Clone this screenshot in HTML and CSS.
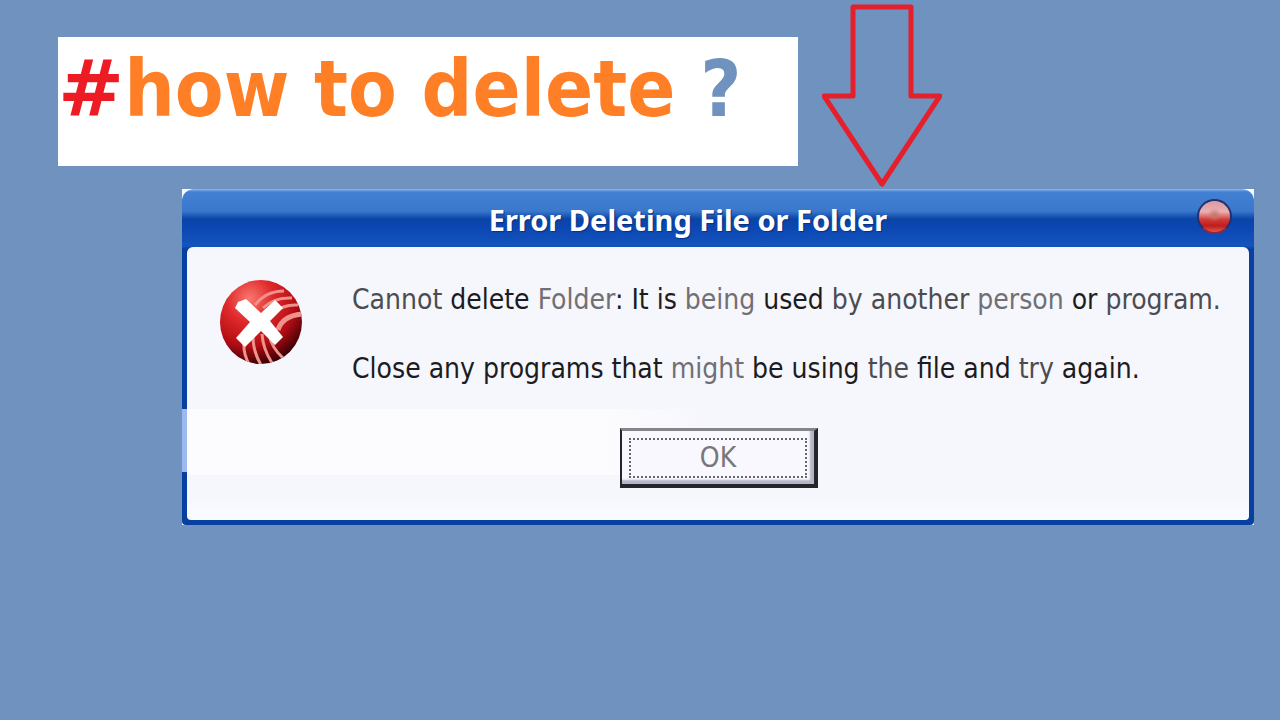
FILE: index.html
```html
<!DOCTYPE html>
<html lang="en">
<head>
<meta charset="utf-8">
<meta name="viewport" content="width=device-width, initial-scale=1">
<title>How to delete?</title>
<link rel="stylesheet" href="styles.css">
</head>
<body>
<header class="top">
  <h1 class="banner"><span class="banner-hash">#</span>how to delete <span class="banner-mark">?</span></h1>
  <svg class="arrow" viewBox="0 0 120 184" aria-hidden="true">
    <path d="M31 3H89V92H118L60 180L2 92H31Z" fill="none" stroke="#e51f2b" stroke-width="5" stroke-linejoin="round"/>
  </svg>
</header>
<main class="stage">
  <section class="dialog" role="alertdialog" aria-labelledby="dialog-title" aria-describedby="dialog-text">
    <div class="titlebar">
      <h2 class="title" id="dialog-title">Error Deleting File or Folder</h2>
      <button class="close" type="button" aria-label="Close"></button>
    </div>
    <div class="content">
      <svg class="error-icon" viewBox="0 0 86 88" aria-hidden="true">
        <defs>
          <radialGradient id="ball" cx="36%" cy="22%" r="80%">
            <stop offset="0" stop-color="#f8786e"/>
            <stop offset=".35" stop-color="#e02a2c"/>
            <stop offset=".7" stop-color="#b50d14"/>
            <stop offset="1" stop-color="#3c0004"/>
          </radialGradient>
          <clipPath id="disc"><ellipse cx="43" cy="44" rx="41" ry="42"/></clipPath>
        </defs>
        <ellipse cx="43" cy="44" rx="41" ry="42" fill="url(#ball)"/>
        <g clip-path="url(#disc)" fill="none" stroke="#ee938c" stroke-width="3">
          <path d="M37 27Q48 13 66 13"/>
          <path d="M45 30Q56 19 74 20"/>
          <path d="M57 34Q66 26 80 27"/>
          <path d="M60 52Q64 38 84 36" stroke-width="5"/>
          <path d="M26 64Q25 75 31 86"/>
          <path d="M35 59Q35 73 43 87"/>
          <path d="M44 56Q45 71 54 85"/>
          <path d="M51 57Q54 70 65 80"/>
        </g>
        <path d="M20 24L28 21L43 35L57 22L65 30L52 43L65 59L57 67L43 53L27 69L18 60L32 44L17 30Z" fill="#fff"/>
      </svg>
      <div class="message" id="dialog-text">
        <p><span class="soft">Cannot</span> delete <span class="faint">Folder</span>: It is <span class="faint">being</span> used <span class="soft">by</span> <span class="soft">another</span> <span class="faint">person</span> or <span class="soft">program.</span></p>
        <p>Close any programs that <span class="faint">might</span> be using <span class="soft">the</span> file and <span class="soft">try</span> again.</p>
      </div>
    </div>
    <div class="actions">
      <button class="ok" type="button"><span class="ok-label">OK</span></button>
    </div>
  </section>
</main>
</body>
</html>
```

FILE: styles.css
```css
* {
  box-sizing: border-box;
}

body {
  margin: 0;
  min-height: 100vh;
  background: #7092be;
  font-family: "DejaVu Sans Condensed", "DejaVu Sans", sans-serif;
}

.top {
  display: flex;
  align-items: flex-start;
  gap: 24px;
  padding: 4px 338px 0 58px;
}

.banner {
  flex: 1;
  min-height: 129px;
  margin: 33px 0 0;
  padding: 4px 0;
  background: #fff;
  color: #ff7f27;
  font-size: 79px;
  font-weight: bold;
  line-height: 96px;
  white-space: nowrap;
}

.banner-hash {
  color: #ed1c24;
  font-family: "DejaVu Sans", sans-serif;
}

.banner-mark {
  color: #7092be;
}

.arrow {
  flex: none;
  width: 120px;
  height: 184px;
}

.stage {
  padding: 1px 26px 24px 182px;
}

.dialog {
  position: relative;
  padding: 0 5px 5px;
  background:
    linear-gradient(#9db8f0, #9db8f0) 0 220px / 5px 63px no-repeat,
    linear-gradient(#8fb8ee 0, #4280d4 3px, #3a78cc 22px, #0a44a6 30px, #0c48b4 40px, #1454bc 57px, #0840a0 60px);
  border-radius: 12px 12px 4px 4px;
}

.dialog::before {
  content: "";
  position: absolute;
  inset: 0;
  z-index: -1;
  background: #f8fcff;
}

.titlebar {
  display: flex;
  align-items: center;
  height: 58px;
  padding: 0 17px 4px 0;
}

.title {
  flex: 1;
  margin: 0;
  padding: 8px 8px 0 0;
  color: #fff;
  font-family: "Noto Sans", sans-serif;
  font-size: 29px;
  line-height: 36px;
  text-align: center;
  text-shadow: 1px 1px 1px #0a3080;
}

.close {
  width: 35px;
  height: 35px;
  padding: 0;
  border: 2px solid #26306e;
  border-bottom-color: #8c2840;
  border-radius: 50%;
  background:
    radial-gradient(circle at 50% 45%, #c87868 0, #c8786800 30%),
    linear-gradient(#d89aa4, #eab0b0 35%, #d03c38 60%, #c01c1c 80%, #e05850);
}

.content {
  display: flex;
  gap: 48px;
  padding: 31px 20px 0 31px;
  border-radius: 6px 6px 0 0;
  background: #f6f6fd;
}

.error-icon {
  flex: none;
  width: 86px;
  height: 88px;
}

.message {
  display: grid;
  gap: 33px;
  padding-top: 4px;
  color: #1c1c20;
  font-size: 28px;
  line-height: 36px;
  white-space: nowrap;
}

.message p {
  margin: 0;
}

.soft {
  color: #4c4c50;
}

.faint {
  color: #707074;
}

.actions {
  display: flex;
  justify-content: center;
  padding: 41px 0 32px 2px;
  background:
    linear-gradient(90deg, #fcfcfe 420px, #fcfcfe00 520px) 0 22px / 100% 66px no-repeat,
    linear-gradient(#f6f6fd 80%, #f8fcff);
  border-radius: 0 0 4px 4px;
}

.ok {
  width: 198px;
  height: 60px;
  padding: 6px 7px;
  border: 2px solid #24242c;
  border-top-color: #85858c;
  border-width: 3px 4px 4px 2px;
  background: #f8f8fe;
  box-shadow: inset -4px -4px 2px #b4b4c4;
  font: 28px/36px "DejaVu Sans Condensed", "DejaVu Sans", sans-serif;
  color: #77777c;
}

.ok-label {
  display: block;
  border: 2px dotted #66666c;
}
```
